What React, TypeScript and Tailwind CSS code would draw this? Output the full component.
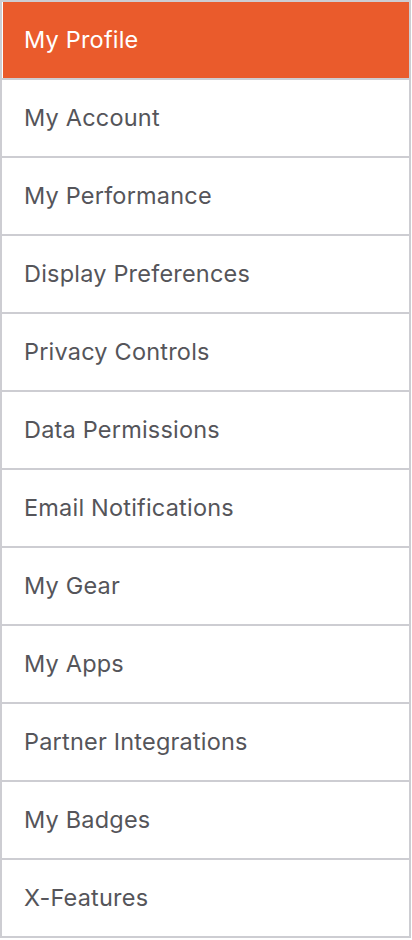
import React from "react";

const items = [
  "My Profile",
  "My Account",
  "My Performance",
  "Display Preferences",
  "Privacy Controls",
  "Data Permissions",
  "Email Notifications",
  "My Gear",
  "My Apps",
  "Partner Integrations",
  "My Badges",
  "X-Features",
];

export default function App() {
  return (
    <div className="min-h-[940px] w-[412px] bg-white">
      <div className="flex w-[411px] flex-col border-2 border-[#cdcdd2] bg-white">
        {items.map((label, i) => {
          const active = i === 0;
          const last = i === items.length - 1;
          return (
            <div
              key={label}
              className={
                (last ? "" : "border-b-2 border-[#cdcdd2] ") +
                "flex h-[76px] box-content items-center"
              }
            >
              <div
                className={
                  active
                    ? "ml-px flex h-full flex-1 items-center bg-[#ea5b2c] pl-[21px] text-white"
                    : "flex h-full flex-1 items-center pl-[22px] text-[#55555a]"
                }
                style={{ fontFamily: "Inter, 'Noto Sans', sans-serif" }}
              >
                <span className="text-[23.5px] leading-none tracking-[0.2px]">{label}</span>
              </div>
            </div>
          );
        })}
      </div>
    </div>
  );
}
